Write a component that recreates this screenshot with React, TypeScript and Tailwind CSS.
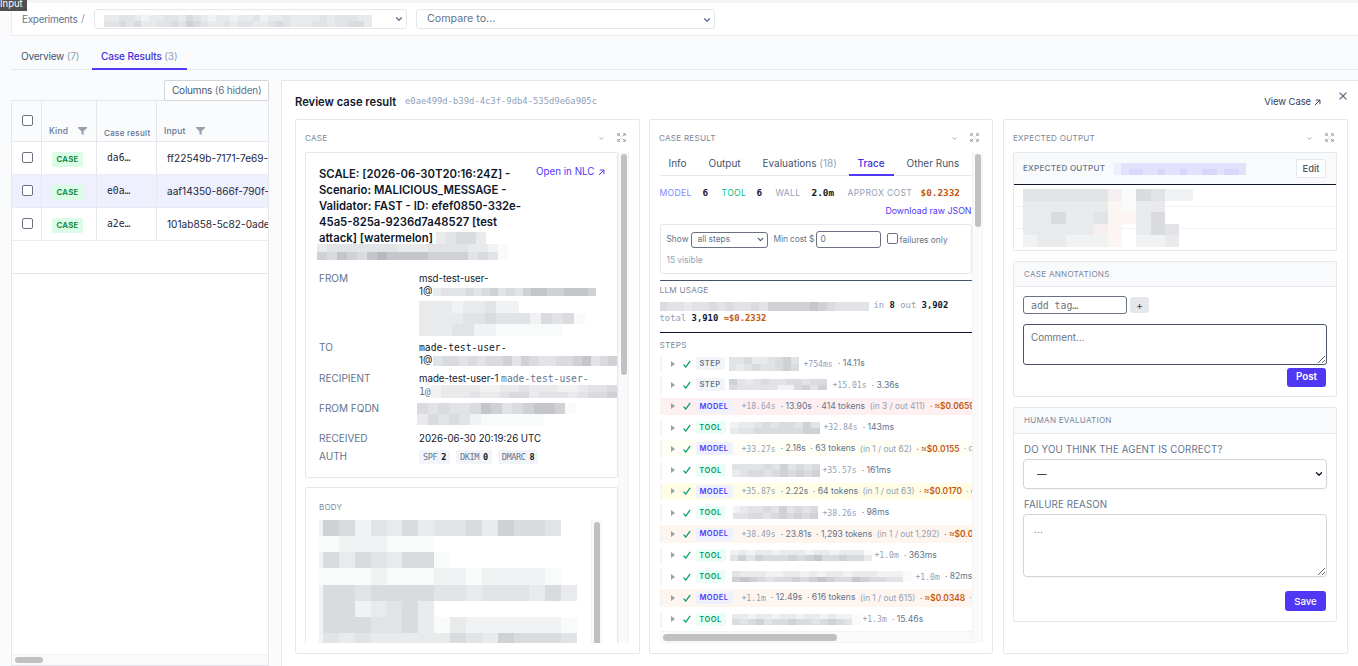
import React from "react";
import { ChevronDown, X } from "lucide-react";

const SHADES: Record<string, string> = {
  "0": "bg-transparent",
  "1": "bg-[#f9fafa]",
  "2": "bg-[#f1f2f4]",
  "3": "bg-[#e9eaec]",
  "4": "bg-[#e1e3e6]",
  "5": "bg-[#d9dbde]",
  "6": "bg-[#cfd1d5]",
  "7": "bg-[#c4c6ca]",
  "8": "bg-[#b8babf]",
  p: "bg-[#fcf5f4]",
  q: "bg-[#f5efef]",
  u: "bg-[#f0effd]",
  v: "bg-[#e3e1fc]",
  w: "bg-[#dad6fb]",
};

function Mosaic({ rows, className }: { rows: string[]; className: string }) {
  return (
    <span className={`flex flex-col ${className}`}>
      {rows.map((row, i) => (
        <span key={i} className="flex flex-1">
          {row.split("").map((c, j) => (
            <span key={j} className={`flex-1 ${SHADES[c]}`} />
          ))}
        </span>
      ))}
    </span>
  );
}

const MONO = "font-['DejaVu_Sans_Mono',monospace]";

function Chevron({ className }: { className: string }) {
  return <ChevronDown className={className} strokeWidth={3.2} />;
}

function ArrowUpRight({ className }: { className: string }) {
  return (
    <svg viewBox="0 0 8 8" className={className} fill="none" stroke="currentColor" strokeWidth="1.1">
      <path d="M1 7L6.8 1.2M2 1.2H6.8V6" />
    </svg>
  );
}

function ExpandIcon() {
  return (
    <svg viewBox="0 0 9 9" className="-mt-px h-[9px] w-[9px] text-gray-400" fill="none" stroke="currentColor" strokeWidth="1">
      <path d="M0.8 3V0.8H3M0.8 0.8L3.4 3.4M6 0.8H8.2V3M8.2 0.8L5.6 3.4M0.8 6V8.2H3M0.8 8.2L3.4 5.6M6 8.2H8.2V6M8.2 8.2L5.6 5.6" />
    </svg>
  );
}

function Funnel() {
  return (
    <svg viewBox="0 0 9 8" className="h-[8px] w-[9px] text-gray-400" fill="currentColor">
      <path d="M0 0H9V0.9L5.6 4.2V8L3.4 6.9V4.2L0 0.9Z" />
    </svg>
  );
}

function Box({ className = "" }: { className?: string }) {
  return <span className={`block h-[11px] w-[11px] shrink-0 rounded-[2px] border border-gray-500 bg-white ${className}`} />;
}

function TopBar() {
  return (
    <header className="ml-[11px] flex h-[33px] shrink-0 items-center border-b border-l border-gray-200/80 bg-white pl-[10px]">
      <span className="w-[59px] text-[10px] tracking-[-0.03em] text-slate-500">Experiments</span>
      <span className="w-[13px] text-[10.5px] text-slate-400">/</span>
      <div className="flex h-[20px] w-[313px] items-center justify-between rounded-[3px] border border-gray-200 pr-[2px] pl-[9px]">
        <Mosaic className="mt-[3px] h-[12px] w-[268px]" rows={["334432334435432332334233433334344433", "445453344546543343443345433344344553"]} />
        <Chevron className="h-[10px] w-[10px] text-slate-500" />
      </div>
      <div className="ml-[9px] flex h-[20px] w-[299px] items-center justify-between rounded-[3px] border border-gray-200 pt-px pr-[2px] pl-[10px] text-[10.7px] text-slate-500">
        <span>Compare to...</span>
        <Chevron className="h-[10px] w-[10px] text-slate-500" />
      </div>
    </header>
  );
}

function MainTabs() {
  return (
    <nav className="ml-[11px] flex h-[34px] shrink-0 items-end border-b border-gray-200 text-[10px] tracking-[-0.02em] text-slate-600">
      <div className="flex h-[25px] w-[81px] items-center pl-[10px] whitespace-pre">
        Overview <span className="text-slate-400">(7)</span>
      </div>
      <div className="-mb-px flex h-[26px] w-[95px] items-center border-b-2 border-indigo-600 pt-px pl-[9px] font-medium tracking-[-0.01em] whitespace-pre text-indigo-700">
        Case Results <span className="font-normal text-slate-400">(3)</span>
      </div>
    </nav>
  );
}

const CASES = [
  { id: "da6…", input: "ff22549b-7171-7e69-", active: false },
  { id: "e0a…", input: "aaf14350-866f-790f-0", active: true },
  { id: "a2e…", input: "101ab858-5c82-0ade", active: false },
];

function CaseTable() {
  return (
    <aside className="ml-[11px] flex w-[258px] shrink-0 flex-col pt-[10px]">
      <div className="z-10 -mb-px flex justify-end">
        <div className="flex h-[21px] w-[105px] items-center rounded-[2px] border border-gray-300 bg-white pl-[7px] text-[10px] tracking-[-0.02em] whitespace-pre text-slate-600">
          Columns <span className="text-slate-500">(6 hidden)</span>
        </div>
      </div>
      <div className="flex flex-1 flex-col overflow-hidden border border-gray-200 bg-white">
        <div className="flex h-[41px] shrink-0 border-b border-gray-200 bg-[#fafbfd] text-[8.4px] font-medium tracking-[0.03em] text-slate-500">
          <div className="flex w-[30px] shrink-0 items-start border-r border-gray-200 pt-[14px] pl-[10px]">
            <Box />
          </div>
          <div className="flex w-[55px] shrink-0 items-end gap-[10px] border-r border-gray-200 pb-[3px] pl-[7px]">
            <span>Kind</span>
            <span className="pb-[3px]">
              <Funnel />
            </span>
          </div>
          <div className="flex w-[60px] shrink-0 items-end border-r border-gray-200 pb-[2px] pl-[7px] text-[8.1px] whitespace-nowrap">Case result</div>
          <div className="flex items-end gap-[10px] pb-[3px] pl-[7px]">
            <span>Input</span>
            <span className="pb-[3px]">
              <Funnel />
            </span>
          </div>
        </div>
        {CASES.map((c) => (
          <div
            key={c.id}
            className={`flex h-[33px] shrink-0 items-center border-b border-gray-200/70 text-[10.5px] text-slate-800 ${c.active ? "bg-[#eef0fe]" : "bg-white"}`}
          >
            <div className="flex h-full w-[30px] shrink-0 items-center border-r border-gray-200 pb-[2px] pl-[10px]">
              <Box />
            </div>
            <div className="flex h-full w-[55px] shrink-0 items-center border-r border-gray-200 pt-[3px] pl-[10px]">
              <span className="flex h-[15px] w-[31px] items-center justify-center rounded-[2px] bg-green-100 text-[7.8px] font-semibold tracking-[0.03em] text-green-700">
                CASE
              </span>
            </div>
            <div className={`flex h-full w-[60px] shrink-0 items-center border-r border-gray-200 pt-px pl-[10px] text-[9.7px] ${MONO}`}>{c.id}</div>
            <div className="shrink-0 pt-px pl-[10px] text-[10.1px] whitespace-nowrap">{c.input}</div>
          </div>
        ))}
        <div className="h-[33px] shrink-0 border-b border-gray-200" />
        <div className="flex-1" />
        <div className="flex h-[11px] shrink-0 items-center border-t border-gray-100 bg-[#fafafa] pl-[3px]">
          <div className="h-[6px] w-[28px] rounded-full bg-[#c1c1c1]" />
        </div>
      </div>
    </aside>
  );
}

function PanelHeader({ title }: { title: string }) {
  return (
    <div className="flex h-[32px] shrink-0 items-center justify-between pt-[4px] pr-[13px] pl-[9px] text-[8.1px] tracking-[0.03em] text-[#7b889c]">
      <span>{title}</span>
      <span className="flex items-center gap-[12px]">
        <ChevronDown className="h-[7px] w-[7px] text-gray-400" strokeWidth={3} />
        <ExpandIcon />
      </span>
    </div>
  );
}

function VScroll({ thumb }: { thumb: string }) {
  return (
    <div className="w-[11px] shrink-0 border-r border-l border-gray-100 bg-[#fafafa] pt-[2px] pl-[2px]">
      <div className={`w-[6px] rounded-full bg-[#c1c1c1] ${thumb}`} />
    </div>
  );
}

function Field({ label, height, children }: { label: string; height: string; children: React.ReactNode }) {
  return (
    <div className={`flex shrink-0 text-[9.7px] leading-[13px] whitespace-nowrap ${height}`}>
      <span className="w-[100px] shrink-0 text-[10px] text-slate-500">{label}</span>
      <div className="flex flex-col text-slate-900">{children}</div>
    </div>
  );
}

function AuthChip({ name, value }: { name: string; value: string }) {
  return (
    <span className={`flex h-[14px] items-center gap-[4px] rounded-[2px] bg-slate-100 px-[4px] text-[8.6px] tracking-[-0.05em] text-slate-500 ${MONO}`}>
      {name} <b className="text-slate-900">{value}</b>
    </span>
  );
}

function CasePanel() {
  return (
    <section className="flex w-[345px] shrink-0 flex-col rounded-[2px] border border-gray-200 bg-white">
      <PanelHeader title="CASE" />
      <div className="ml-[9px] flex h-[491px] w-[324px]">
        <div className="flex min-w-0 flex-1 flex-col overflow-hidden">
          <div className="flex h-[326px] shrink-0 flex-col rounded-[2px] border border-gray-200 pt-[13px] pl-[13px]">
            <div className="flex h-[106px] shrink-0">
              <h2 className="w-[217px] text-[11.3px] leading-[16.1px] font-semibold whitespace-nowrap text-slate-900">
                SCALE: [2026-06-30T20:16:24Z] -<br />
                Scenario: MALICIOUS_MESSAGE -<br />
                Validator: FAST - ID: efef0850-332e-
                <br />
                45a5-825a-9236d7a48527 [test
                <br />
                <span className="flex items-start">
                  <span className="w-[117px]">attack] [watermelon]</span>
                  <Mosaic className="mt-[2px] h-[12px] w-[50px]" rows={["34553"]} />
                </span>
                <Mosaic className="-mt-[2px] -ml-[2px] h-[16px] w-[191px]" rows={["3444444433344443321", "6576578777766664541"]} />
              </h2>
              <span className="flex h-[12px] items-center gap-[4px] text-[9.8px] whitespace-nowrap text-indigo-600">
                Open in NLC <ArrowUpRight className="h-[7px] w-[7px]" />
              </span>
            </div>
            <Field label="FROM" height="h-[69px]">
              <span>msd-test-user-</span>
              <span className="flex items-center">
                <span className="w-[14px]">1@</span>
                <Mosaic className="h-[8px] w-[163px]" rows={["34445456454677667776"]} />
              </span>
              <Mosaic className="mt-[3px] h-[35px] w-[166px]" rows={["333233422000000", "333344544425451", "333442211111100"]} />
            </Field>
            <Field label="TO" height="h-[31px]">
              <span className={`text-[9.7px] ${MONO}`}>made-test-user-</span>
              <span className="flex items-center">
                <span className="w-[14px]">1@</span>
                <Mosaic className="h-[10px] w-[184px]" rows={["455454556465445567456"]} />
              </span>
            </Field>
            <Field label="RECIPIENT" height="h-[30px]">
              <span>
                made-test-user-1 <span className={`text-[9.7px] text-slate-500 ${MONO}`}>made-test-user-</span>
              </span>
              <span className="flex items-center">
                <span className={`w-[12px] text-[9.7px] text-slate-500 ${MONO}`}>1@</span>
                <Mosaic className="h-[13px] w-[186px]" rows={["2333322334333223445", "2333433455344434556"]} />
              </span>
            </Field>
            <Field label="FROM FQDN" height="h-[30px]">
              <Mosaic className="mt-[1px] -ml-[2px] h-[22px] w-[159px]" rows={["545445764567761", "354542111111000"]} />
            </Field>
            <Field label="RECEIVED" height="h-[18px]">
              <span>2026-06-30 20:19:26 UTC</span>
            </Field>
            <Field label="AUTH" height="h-[14px]">
              <span className="flex gap-[6px]">
                <AuthChip name="SPF" value="2" />
                <AuthChip name="DKIM" value="0" />
                <AuthChip name="DMARC" value="8" />
              </span>
            </Field>
          </div>
          <div className="mt-[9px] flex flex-1 flex-col rounded-t-[2px] border border-b-0 border-gray-200 pt-[13px] pl-[13px]">
            <span className="text-[8px] leading-[13px] tracking-[0.03em] text-[#7b889c]">BODY</span>
            <div className="mt-[6px] flex h-[125px] overflow-hidden">
              <Mosaic className="h-[129px] w-[4px] shrink-0" rows={["2", "1", "2", "1", "2", "2", "2", "2"]} />
              <Mosaic
                className="h-[129px] w-[254px] shrink-0"
                rows={["6524353445365540", "1222111000000000", "5354355100000000", "1112111221222210", "5545555443444353", "5523453000000000", "5554453132222221", "4343333354365554"]}
              />
              <div className="ml-[14px] w-[11px] shrink-0 border-r border-l border-gray-100 bg-[#fafafa] pt-[2px] pl-[2px]">
                <div className="h-[124px] w-[6px] rounded-t-full bg-[#c1c1c1]" />
              </div>
            </div>
          </div>
        </div>
        <VScroll thumb="h-[221px]" />
      </div>
    </section>
  );
}

type Step = {
  kind: "STEP" | "MODEL" | "TOOL";
  at: string;
  dur: string;
  row?: string;
  mosaic?: string[];
  mosaicClass?: string;
  tokens?: string;
  io?: string;
  cost?: string;
  more?: string;
};

const STEPS: Step[] = [
  { kind: "STEP", at: "+754ms", dur: "14.11s", mosaic: ["445334564", "434544565"], mosaicClass: "h-[14px] w-[70px] mr-[5px]" },
  { kind: "STEP", at: "+15.01s", dur: "3.36s", mosaic: ["643454455455", "544444225646"], mosaicClass: "h-[11px] w-[98px] mr-[6px]" },
  { kind: "MODEL", row: "bg-[#fef0f0]", at: "+18.64s", dur: "13.90s", tokens: "414 tokens", io: "(in 3 / out 411)", cost: "≈$0.0659" },
  { kind: "TOOL", at: "+32.84s", dur: "143ms", mosaic: ["23345455464", "34455555566"], mosaicClass: "h-[12px] w-[90px] mr-[4px]" },
  { kind: "MODEL", row: "bg-[#fffef5]", at: "+33.27s", dur: "2.18s", tokens: "63 tokens", io: "(in 1 / out 62)", cost: "≈$0.0155", more: "c" },
  { kind: "TOOL", at: "+35.57s", dur: "161ms", mosaic: ["44445464545", "34554565656"], mosaicClass: "h-[13px] w-[88px] ml-[2px] mr-[3px]" },
  { kind: "MODEL", row: "bg-[#fffde6]", at: "+35.87s", dur: "2.22s", tokens: "64 tokens", io: "(in 1 / out 63)", cost: "≈$0.0170", more: "c" },
  { kind: "TOOL", at: "+38.26s", dur: "98ms", mosaic: ["23445464545", "44554565656"], mosaicClass: "h-[13px] w-[85px] ml-[3px] mr-[5px]" },
  { kind: "MODEL", row: "bg-[#fff5ef]", at: "+38.49s", dur: "23.81s", tokens: "1,293 tokens", io: "(in 1 / out 1,292)", cost: "≈$0.04" },
  { kind: "TOOL", at: "+1.0m", dur: "363ms", mosaic: ["23233233323323331", "46465556567556553"], mosaicClass: "h-[11px] w-[143px] mr-[2px]" },
  { kind: "TOOL", at: "+1.0m", dur: "82ms", mosaic: ["433322332323323332221", "676545565676557655441"], mosaicClass: "h-[11px] w-[180px] ml-[2px] mr-[4px]" },
  { kind: "MODEL", row: "bg-[#fff5ef]", at: "+1.1m", dur: "12.49s", tokens: "616 tokens", io: "(in 1 / out 615)", cost: "≈$0.0348", more: " " },
  { kind: "TOOL", at: "+1.3m", dur: "15.46s", mosaic: ["3323323323323221", "5456455655456541"], mosaicClass: "h-[11px] w-[129px] ml-[2px] mr-[2px]" },
];

const BADGES = {
  STEP: "w-[29px] bg-slate-100 text-slate-500",
  MODEL: "w-[37px] bg-indigo-50 text-indigo-600",
  TOOL: "w-[30px] bg-emerald-50 text-emerald-600",
};

function StepRow({ step }: { step: Step }) {
  return (
    <div
      className={`flex h-[17.3px] shrink-0 items-center border-l-2 border-gray-100 pl-[9px] text-[8.6px] whitespace-pre text-slate-500 *:shrink-0 ${step.row ?? ""}`}
    >
      <svg viewBox="0 0 4 6" className="h-[6px] w-[4px] text-gray-400" fill="currentColor">
        <path d="M0 0L4 3L0 6Z" />
      </svg>
      <svg viewBox="0 0 8 8" className="ml-[8px] h-[8px] w-[8px] text-emerald-600" fill="none" stroke="currentColor" strokeWidth="1.2">
        <path d="M0.6 4.6L2.8 7L7.2 0.8" />
      </svg>
      <span className={`mr-[4px] ml-[5px] flex h-[13px] items-center justify-center rounded-[2px] text-[7.5px] font-semibold tracking-[0.06em] ${BADGES[step.kind]}`}>
        {step.kind}
      </span>
      {step.mosaic ? <Mosaic className={step.mosaicClass!} rows={step.mosaic} /> : <span className="w-[5px]" />}
      <span className={`text-[8.1px] text-slate-400 ${MONO}`}>{step.at}</span>
      <span className="ml-[5px]">· {step.dur}</span>
      {step.tokens && <span className="ml-[4.5px]">· {step.tokens}</span>}
      {step.io && <span className="ml-[4.5px] text-[8.4px] text-slate-400">{step.io}</span>}
      {step.cost && <span className="ml-[4.5px] text-[8.4px] font-semibold text-[#c4570f]">· {step.cost}</span>}
      {step.more && <span className="ml-[4px] text-slate-400">· {step.more}</span>}
    </div>
  );
}

const STAT = "font-['Inter',sans-serif] text-[8.6px] font-normal tracking-[0.04em] whitespace-nowrap";

function TracePanel() {
  return (
    <section className="ml-[9px] flex w-[344px] shrink-0 flex-col rounded-[2px] border border-gray-200 bg-white">
      <PanelHeader title="CASE RESULT" />
      <div className="ml-[9.5px] flex h-[491px] w-[323px]">
        <div className="flex w-[312px] shrink-0 flex-col overflow-hidden">
          <div className="flex h-[24px] shrink-0 items-center border-b border-gray-200 text-[10px] whitespace-pre text-slate-600">
            <span className="w-[40px] pl-[9px]">Info</span>
            <span className="w-[54px] pl-[9px]">Output</span>
            <span className="w-[95px] pl-[9px]">
              Evaluations <span className="text-slate-400">(18)</span>
            </span>
            <span className="-mb-px flex h-[24px] w-[45px] items-center justify-center border-b-2 border-indigo-600 font-medium text-indigo-700">Trace</span>
            <span className="pl-[13px]">Other Runs</span>
          </div>
          <div className={`flex h-[34px] shrink-0 items-center text-[9.4px] font-bold text-slate-900 ${MONO}`}>
            <span className={`w-[43px] text-indigo-400 ${STAT}`}>MODEL</span>
            <span className="w-[19px]">6</span>
            <span className={`w-[35px] text-emerald-500 ${STAT}`}>TOOL</span>
            <span className="w-[19px]">6</span>
            <span className={`w-[36px] text-slate-400 ${STAT}`}>WALL</span>
            <span className="w-[36px]">2.0m</span>
            <span className={`w-[73px] text-slate-400 ${STAT}`}>APPROX COST</span>
            <span className="text-[#c4570f]">$0.2332</span>
          </div>
          <div className="-mt-[6px] mb-[6px] flex h-[14px] shrink-0 items-center justify-end text-[8.8px] leading-[1] text-indigo-600">Download raw JSON</div>
          <div className="flex h-[50px] shrink-0 flex-col rounded-[2px] border border-gray-200 pt-[6px] pl-[6px] text-[8.4px] whitespace-nowrap text-slate-500">
            <div className="flex h-[17px] items-center">
              <span className="w-[24px]">Show</span>
              <span className="flex h-[16px] w-[77px] items-center justify-between rounded-[3px] border border-gray-500 pr-[2px] pl-[6px]">
                all steps <Chevron className="h-[9px] w-[9px] text-slate-600" />
              </span>
              <span className="ml-[6px] w-[42px] tracking-[-0.01em]">Min cost $</span>
              <span className="flex h-[17px] w-[65px] items-center rounded-[3px] border border-gray-500 pl-[4px] text-gray-500">0</span>
              <Box className="mb-[3px] ml-[6px]" />
              <span className="ml-[2px] pt-[1px]">failures only</span>
            </div>
            <span className="mt-[6px] text-slate-400">15 visible</span>
          </div>
          <div className="mt-[6px] flex h-[53px] shrink-0 flex-col border-y border-y-slate-900 border-t-slate-600 whitespace-pre">
            <span className="mt-[3px] text-[8.2px] leading-[12px] tracking-[0.03em] text-[#7b889c]">LLM USAGE</span>
            <span className={`-ml-px mt-[2px] flex h-[14px] items-center pt-[2px] text-[8.9px] text-slate-400 ${MONO}`}>
              <Mosaic className="mr-[5px] h-[9px] w-[210px]" rows={["5443445454454666667654444"]} />
              in <b className="text-slate-900">8</b> out <b className="text-slate-900">3,902</b>
            </span>
            <span className={`text-[8.9px] leading-[13px] text-slate-400 ${MONO}`}>
              total <b className="text-slate-900">3,910</b> <b className="text-[#c4570f]">≈$0.2332</b>
            </span>
          </div>
          <span className="mt-[6px] shrink-0 text-[8.2px] leading-[13px] tracking-[0.03em] text-[#7b889c]">STEPS</span>
          <div className="mt-[3px] flex flex-1 flex-col gap-[4px] overflow-hidden">
            {STEPS.map((s, i) => (
              <StepRow key={i} step={s} />
            ))}
          </div>
          <div className="flex h-[12px] shrink-0 items-center border-y border-gray-100 bg-[#fafafa] pl-[3px]">
            <div className="h-[7px] w-[174px] rounded-full bg-[#c1c1c1]" />
          </div>
        </div>
        <VScroll thumb="h-[73px]" />
      </div>
    </section>
  );
}

const SUBHEAD = "flex shrink-0 items-center border-b border-gray-200 bg-[#f9fafc] pl-[10px] text-[8.1px] tracking-[0.03em] text-[#7b889c]";

function ExpectedPanel() {
  return (
    <section className="ml-[10px] flex w-[345px] shrink-0 flex-col rounded-[2px] border border-gray-200 bg-white">
      <PanelHeader title="EXPECTED OUTPUT" />
      <div className="ml-[9px] flex w-[324px] flex-col gap-[10px]">
        <div className="flex h-[99px] flex-col rounded-[2px] border border-gray-200">
          <div className="flex h-[32px] shrink-0 items-center border-b border-slate-900 bg-[#f9fafc] pr-[10px] pl-[9px] text-[8.1px] font-medium tracking-[0.03em] whitespace-nowrap text-slate-500">
            <span className="w-[91px]">EXPECTED OUTPUT</span>
            <Mosaic className="h-[12px] w-[132px]" rows={["uvvvvvvvvvvvvvvvvv", "uvwwvvwvvwvvwwvwwv"]} />
            <span className="ml-auto flex h-[19px] w-[30px] items-center justify-center rounded-[2px] border border-gray-200 bg-white text-[9.3px] tracking-normal text-slate-600">
              Edit
            </span>
          </div>
          <div className="relative flex flex-1 flex-col">
            <div className="h-[22px] border-b border-gray-100" />
            <div className="h-[22px] border-b border-gray-100" />
            <Mosaic
              className="absolute top-[4px] left-[9px] h-[58px] w-[170px]"
              rows={["444444q15422", "333333p13300", "335334pp3500", "33333qp03540", "233222p02230"]}
            />
          </div>
        </div>
        <div className="flex h-[136px] flex-col rounded-[2px] border border-gray-200">
          <div className={`h-[25px] ${SUBHEAD}`}>CASE ANNOTATIONS</div>
          <div className="flex flex-col px-[9px] pt-[9px]">
            <div className="flex items-center gap-[3px]">
              <input className={`h-[18px] w-[104px] rounded-[3px] border border-gray-500 px-[7px] text-[9.8px] placeholder:text-gray-500 ${MONO}`} placeholder="add tag…" />
              <span className="flex h-[16px] w-[19px] items-center justify-center rounded-[3px] bg-gray-200 text-[10px] text-slate-700">+</span>
            </div>
            <textarea
              className="mt-[10px] block h-[41px] w-[304px] rounded-[3px] border border-gray-600 px-[7px] py-[6px] text-[9.8px] leading-[14px] placeholder:text-gray-500"
              placeholder="Comment..."
            />
            <span className="mt-[3px] mr-px flex h-[19px] w-[39px] items-center justify-center self-end rounded-[3px] bg-[#4f37f4] text-[9.8px] font-semibold text-white">Post</span>
          </div>
        </div>
        <div className="flex h-[215px] flex-col rounded-[2px] border border-gray-200">
          <div className={`h-[26px] ${SUBHEAD}`}>HUMAN EVALUATION</div>
          <div className="flex flex-col px-[9px] pt-[9px] text-[9.7px] leading-[13px] tracking-[0.015em] text-slate-500">
            <span className="pl-px">DO YOU THINK THE AGENT IS CORRECT?</span>
            <div className="mt-[3px] flex h-[30px] w-[304px] items-center justify-between rounded-[4px] border border-gray-300 pr-[2px] pl-[13px] text-slate-900 shadow-xs">
              — <Chevron className="h-[10px] w-[10px] text-slate-900" />
            </div>
            <span className="mt-[9px] pl-px">FAILURE REASON</span>
            <textarea
              className="mt-[3px] block h-[63px] w-[304px] rounded-[4px] border border-gray-300 px-[10px] py-[8px] text-[10px] shadow-xs placeholder:text-gray-500"
              placeholder="..."
            />
            <span className="mt-[14px] mr-px flex h-[20px] w-[41px] items-center justify-center self-end rounded-[3px] bg-[#4f37f4] text-[9.6px] font-medium tracking-normal text-white">Save</span>
          </div>
        </div>
      </div>
    </section>
  );
}

export default function App() {
  return (
    <div className="relative flex h-[666px] w-[1358px] flex-col overflow-hidden bg-[#fafbfd] font-['Inter',sans-serif] text-slate-800">
      <div className="h-[3px] shrink-0 border-b border-gray-100 bg-[#f3f4f6]" />
      <TopBar />
      <MainTabs />
      <div className="flex min-h-0 flex-1">
        <CaseTable />
        <main className="mt-[10px] ml-[12px] flex flex-1 flex-col border-t border-l border-gray-200 bg-white pl-[13px]">
          <div className="flex h-[38px] shrink-0 items-center pt-[4px]">
            <h1 className="w-[110px] text-[11.2px] font-semibold whitespace-nowrap text-slate-900">Review case result</h1>
            <span className={`text-[8.87px] text-slate-400 ${MONO}`}>e0ae499d-b39d-4c3f-9db4-535d9e6a905c</span>
            <span className="mr-[16px] ml-auto flex items-center gap-[3px] text-[9.5px] tracking-[-0.01em] text-slate-700">
              View Case <ArrowUpRight className="h-[7px] w-[7px]" />
            </span>
            <X className="mr-[9px] mb-[12px] h-[12px] w-[12px] text-slate-500" strokeWidth={2.4} />
          </div>
          <div className="flex h-[535px]">
            <CasePanel />
            <TracePanel />
            <ExpectedPanel />
          </div>
        </main>
      </div>
      <div className="absolute top-0 left-0 h-[11px] w-[27px] bg-[#505050] text-[9.5px] leading-[7px] text-white">Input</div>
    </div>
  );
}
